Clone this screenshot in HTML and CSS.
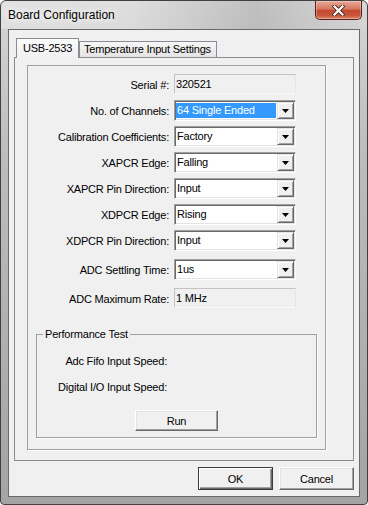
FILE: index.html
```html
<!DOCTYPE html>
<html lang="en">
<head>
    <meta charset="UTF-8">
    <meta name="viewport" content="width=device-width, initial-scale=1.0">
    <title>Board Configuration</title>
    <link rel="stylesheet" href="styles.css">
</head>
<body>
    <div class="window">
        <div class="titlebar">
            <span class="title">Board Configuration</span>
            <button class="close-btn" aria-label="Close">
                <svg width="13" height="11" viewBox="0 0 13 11">
                    <path d="M2.5 1.5 L10.5 9.5 M10.5 1.5 L2.5 9.5" stroke="#4b2a24" stroke-width="4" stroke-linecap="square" fill="none"/>
                    <path d="M2.5 1.5 L10.5 9.5 M10.5 1.5 L2.5 9.5" stroke="#fff" stroke-width="2.2" stroke-linecap="square" fill="none"/>
                </svg>
            </button>
        </div>

        <div class="client">
            <div class="tabs">
                <div class="tab active">USB-2533</div>
                <div class="tab">Temperature Input Settings</div>
            </div>

            <div class="tab-page">
                <div class="panel">
                    <div class="row">
                        <label>Serial #:</label>
                        <div class="field static">320521</div>
                    </div>
                    <div class="row">
                        <label>No. of Channels:</label>
                        <div class="field combo">
                            <span class="value selected">64 Single Ended</span>
                            <span class="drop"><svg width="7" height="4" viewBox="0 0 7 4"><polygon points="0,0 7,0 3.5,4" fill="#000"/></svg></span>
                        </div>
                    </div>
                    <div class="row">
                        <label>Calibration Coefficients:</label>
                        <div class="field combo">
                            <span class="value">Factory</span>
                            <span class="drop"><svg width="7" height="4" viewBox="0 0 7 4"><polygon points="0,0 7,0 3.5,4" fill="#000"/></svg></span>
                        </div>
                    </div>
                    <div class="row">
                        <label>XAPCR Edge:</label>
                        <div class="field combo">
                            <span class="value">Falling</span>
                            <span class="drop"><svg width="7" height="4" viewBox="0 0 7 4"><polygon points="0,0 7,0 3.5,4" fill="#000"/></svg></span>
                        </div>
                    </div>
                    <div class="row">
                        <label>XAPCR Pin Direction:</label>
                        <div class="field combo">
                            <span class="value">Input</span>
                            <span class="drop"><svg width="7" height="4" viewBox="0 0 7 4"><polygon points="0,0 7,0 3.5,4" fill="#000"/></svg></span>
                        </div>
                    </div>
                    <div class="row">
                        <label>XDPCR Edge:</label>
                        <div class="field combo">
                            <span class="value">Rising</span>
                            <span class="drop"><svg width="7" height="4" viewBox="0 0 7 4"><polygon points="0,0 7,0 3.5,4" fill="#000"/></svg></span>
                        </div>
                    </div>
                    <div class="row">
                        <label>XDPCR Pin Direction:</label>
                        <div class="field combo">
                            <span class="value">Input</span>
                            <span class="drop"><svg width="7" height="4" viewBox="0 0 7 4"><polygon points="0,0 7,0 3.5,4" fill="#000"/></svg></span>
                        </div>
                    </div>
                    <div class="row spaced">
                        <label>ADC Settling Time:</label>
                        <div class="field combo">
                            <span class="value">1us</span>
                            <span class="drop"><svg width="7" height="4" viewBox="0 0 7 4"><polygon points="0,0 7,0 3.5,4" fill="#000"/></svg></span>
                        </div>
                    </div>
                    <div class="row spaced">
                        <label>ADC Maximum Rate:</label>
                        <div class="field static">1 MHz</div>
                    </div>

                    <fieldset class="group">
                        <legend>Performance Test</legend>
                        <div class="speed-row first">
                            <label>Adc Fifo Input Speed:</label>
                        </div>
                        <div class="speed-row">
                            <label>Digital I/O Input Speed:</label>
                        </div>
                        <button class="btn run-btn">Run</button>
                    </fieldset>
                </div>
            </div>

            <div class="actions">
                <button class="btn default">OK</button>
                <button class="btn">Cancel</button>
            </div>
        </div>
    </div>
</body>
</html>
```

FILE: styles.css
```css
* {
    box-sizing: border-box;
}

body {
    margin: 0;
    background: #fff;
    font-family: 'Liberation Sans', Arial, sans-serif;
    font-size: 11px;
    letter-spacing: -0.2px;
    color: #000;
}

.window {
    width: 368px;
    height: 505px;
    border: 1px solid #404040;
    border-radius: 6px 6px 4px 4px;
    background: linear-gradient(#d6d6d6, #bdbdbd 30%, #a4a4a4);
    display: flex;
    flex-direction: column;
    overflow: hidden;
}

.titlebar {
    height: 28px;
    flex-shrink: 0;
    display: flex;
    align-items: flex-start;
    background: linear-gradient(90deg, rgba(255, 255, 255, 0.3), rgba(255, 255, 255, 0.2) 35%, rgba(0, 0, 0, 0.1) 70%, rgba(255, 255, 255, 0.05));
}

.title {
    font-size: 12px;
    letter-spacing: 0;
    line-height: 15px;
    margin: 7px 0 0 7px;
    text-shadow: 0 0 6px #fff, 0 0 10px #fff;
}

.close-btn {
    margin-left: auto;
    margin-right: 5px;
    width: 47px;
    height: 19px;
    padding: 0;
    border: 1px solid #5a2118;
    border-top: none;
    border-radius: 0 0 5px 5px;
    background: linear-gradient(#e8a898, #d7775f 45%, #c24a30 52%, #c8553a 80%, #dc8b6e);
    box-shadow: inset 0 0 0 1px rgba(255, 255, 255, 0.3);
    display: flex;
    align-items: center;
    justify-content: center;
}

.client {
    height: 468px;
    flex-shrink: 0;
    margin: 0 7px;
    border: 1px solid #6a6a6a;
    background: #f0f0f0;
    padding-top: 8px;
    display: flex;
    flex-direction: column;
}

/* tabs */
.tabs {
    display: flex;
    align-items: flex-end;
    height: 19px;
    margin-left: 7px;
}

.tab {
    height: 16px;
    line-height: 15px;
    padding: 0 4px;
    border: 1px solid #898c95;
    border-bottom: none;
    background: linear-gradient(#f6f6f6, #e4e4e4);
    white-space: nowrap;
    width: 138px;
}

.tab.active {
    width: 63px;
    height: 20px;
    line-height: 18px;
    text-align: center;
    margin-bottom: -1px;
    background: linear-gradient(#fbfbfb, #f0f0f0);
    position: relative;
    z-index: 1;
}

.tab-page {
    height: 404px;
    margin: 0 5px;
    border: 1px solid #898c95;
    background: #f0f0f0;
    padding: 7px 0 0 12px;
}

.panel {
    width: 299px;
    height: 385px;
    border: 1px solid #a0a0a0;
    box-shadow: 1px 1px 0 #fff;
    padding-top: 8px;
    display: flex;
    flex-direction: column;
    gap: 5px;
}

/* form rows */
.row {
    display: flex;
    align-items: center;
    height: 21px;
}

.row label {
    width: 141px;
    margin-right: 5px;
    text-align: right;
}

.row.spaced {
    margin-top: 3px;
}

.field {
    width: 122px;
    height: 21px;
}

.static {
    height: 20px;
    align-self: flex-start;
    background: #f0f0f0;
    border: 1px solid;
    border-color: #c3c3c3 #e6e6e6 #fafafa #c3c3c3;
    padding-left: 1px;
    line-height: 18px;
}

.combo {
    display: flex;
    background: #fff;
    border: 1px solid;
    border-color: #a0a0a0 #fff #fff #a0a0a0;
    box-shadow: inset 1px 1px #696969, inset -1px -1px #e3e3e3;
    padding: 1px;
}

.combo .value {
    flex: 1;
    padding-left: 1px;
    line-height: 17px;
}

.combo .value.selected {
    background: #3399ff;
    color: #fff;
    margin: 1px 1px 1px 0;
    line-height: 15px;
}

.drop {
    width: 17px;
    background: #f0f0f0;
    border: 1px solid;
    border-color: #e3e3e3 #696969 #696969 #e3e3e3;
    box-shadow: inset 1px 1px #fff, inset -1px -1px #a0a0a0;
    display: flex;
    align-items: center;
    justify-content: center;
}

/* performance group */
.group {
    margin: 14px 8px 0;
    padding: 0 0 6px;
    border: 1px solid #a0a0a0;
    box-shadow: 1px 1px 0 #fff;
    display: flex;
    flex-direction: column;
}

.group legend {
    margin-left: 6px;
    padding: 0 2px;
    line-height: 13px;
}

.speed-row {
    display: flex;
    align-items: center;
    height: 21px;
    margin-top: 5px;
}

.speed-row.first {
    margin-top: 9px;
}

.speed-row label {
    width: 130px;
    text-align: right;
}

/* buttons */
.btn {
    width: 75px;
    height: 23px;
    padding: 0;
    font: inherit;
    letter-spacing: inherit;
    color: #000;
    background: #f0f0f0;
    border: 1px solid;
    border-color: #fff #696969 #696969 #fff;
    box-shadow: inset -1px -1px #a0a0a0, inset 1px 1px #e3e3e3;
}

.btn.default {
    border-color: #3a3a3a;
    box-shadow: inset 1px 1px #fff, inset -1px -1px #696969, inset -2px -2px #a0a0a0;
}

.run-btn {
    width: 83px;
    height: 21px;
    margin: 13px auto 0;
}

.actions {
    display: flex;
    justify-content: flex-end;
    gap: 6px;
    margin: 6px 5px 0 0;
}
```
